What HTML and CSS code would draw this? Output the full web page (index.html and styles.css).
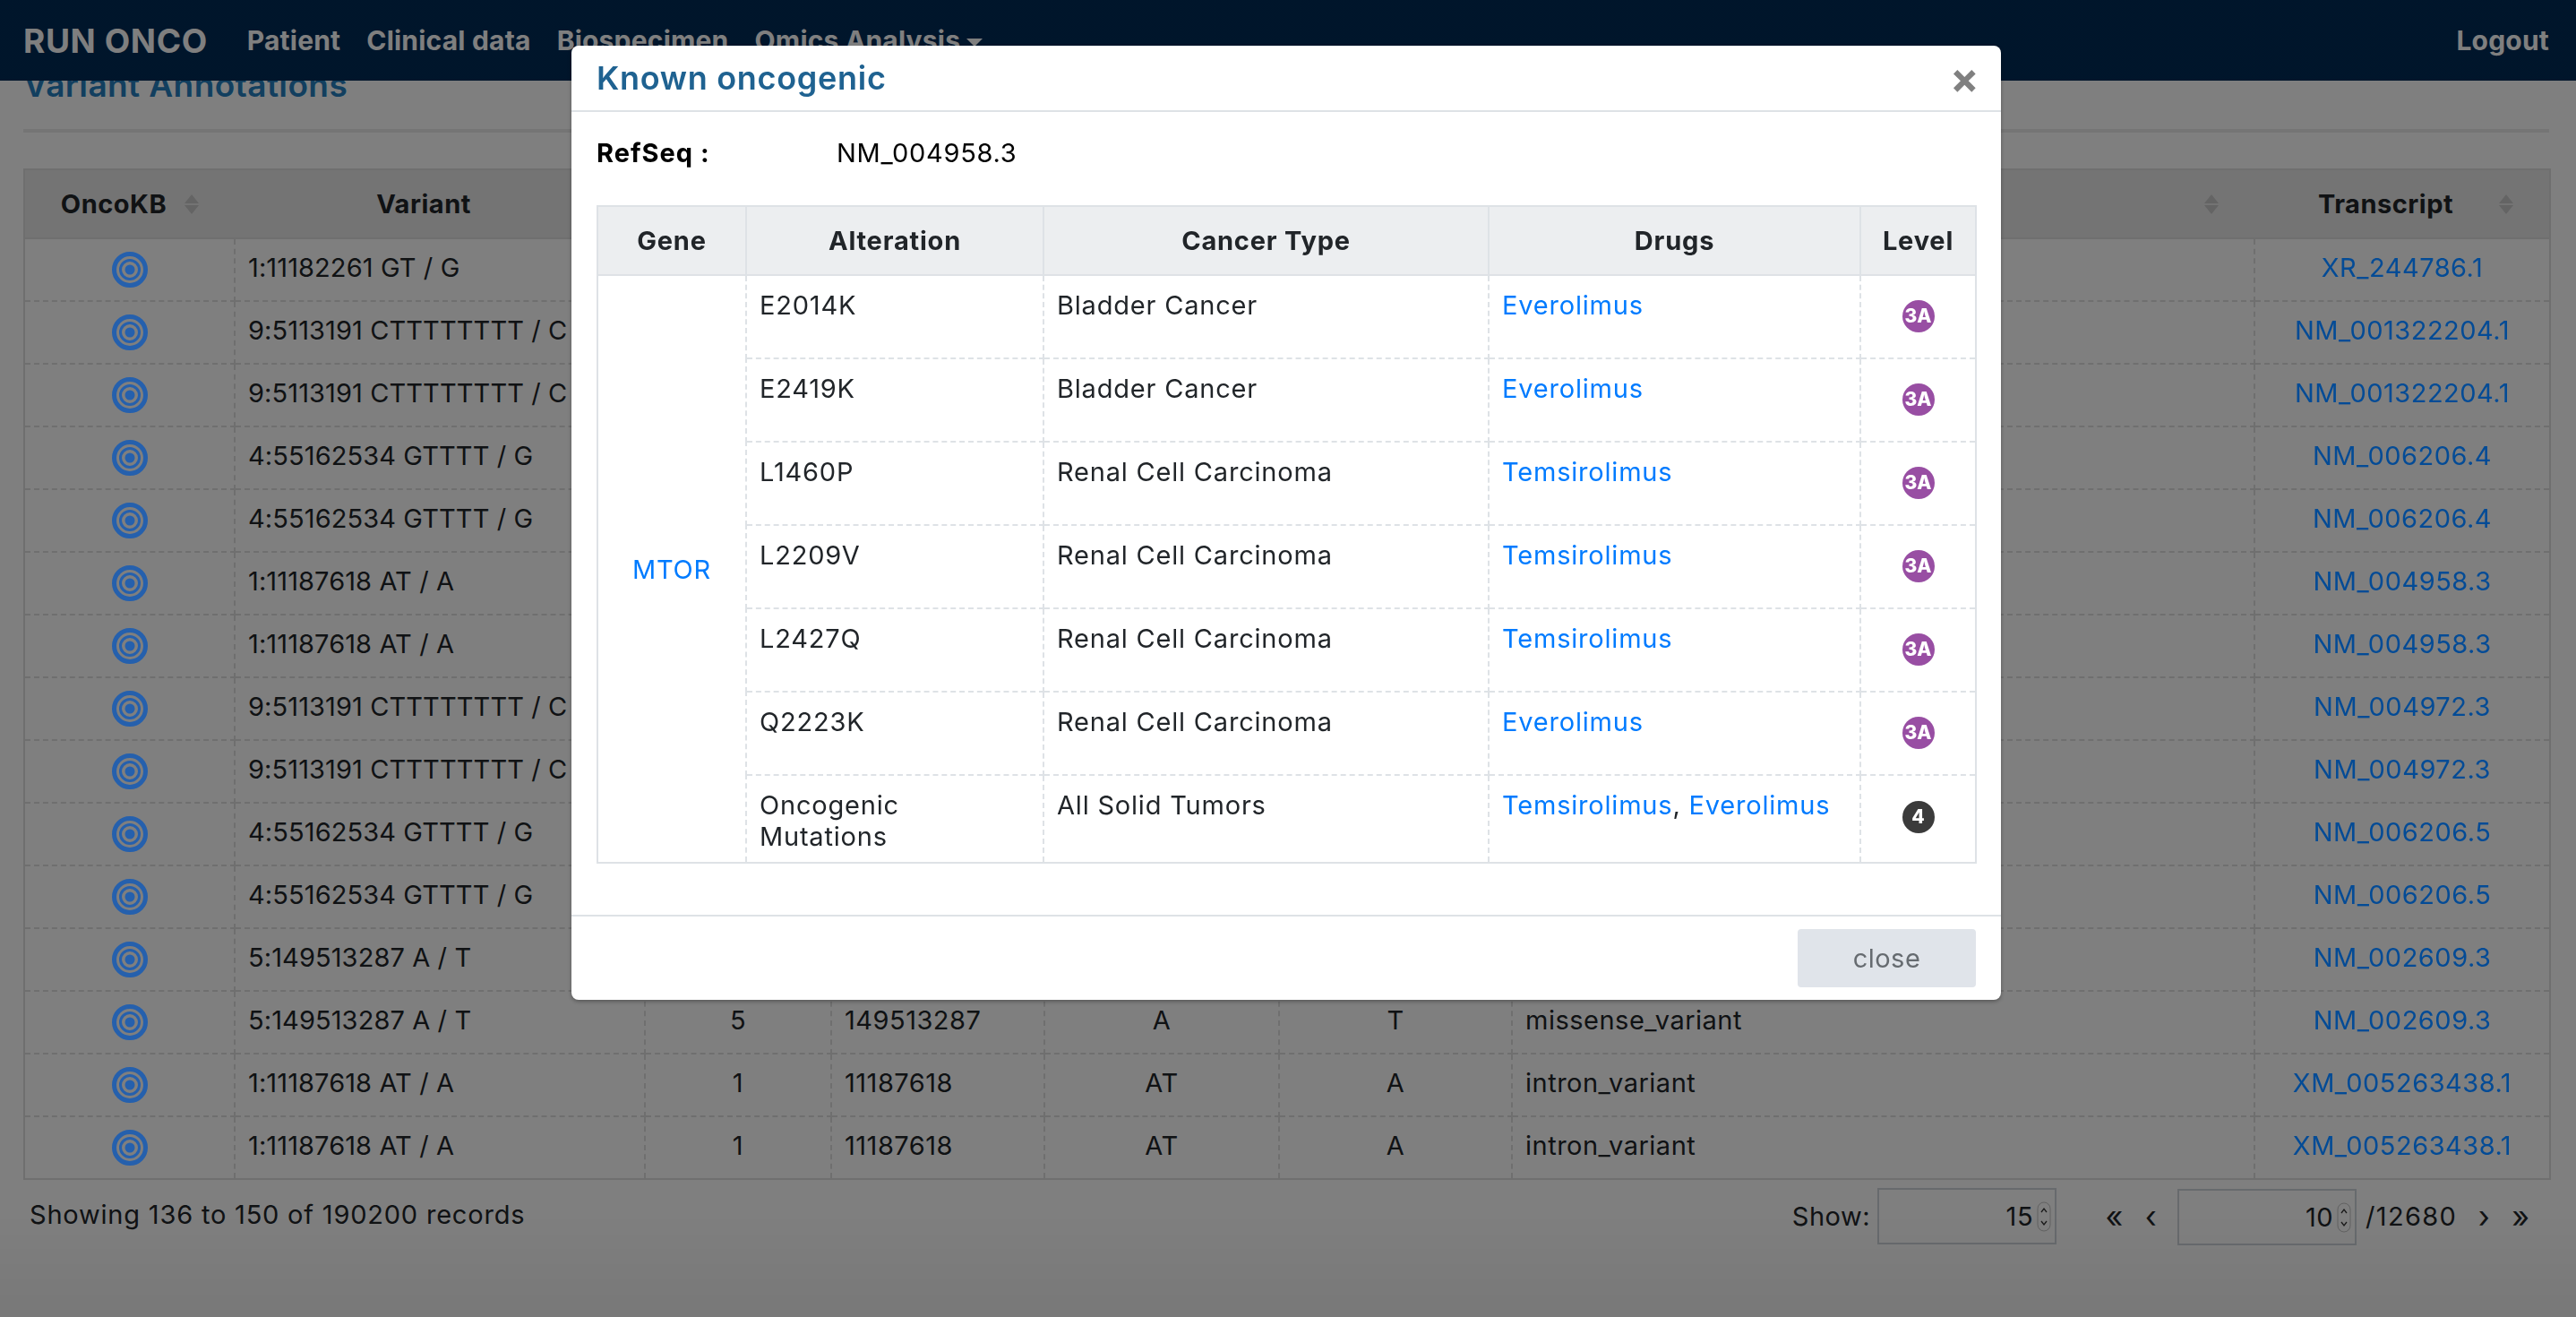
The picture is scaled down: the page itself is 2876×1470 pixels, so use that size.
FILE: index.html
```html
<!DOCTYPE html>
<html lang="en">
<head>
<meta charset="utf-8">
<title>Run Onco</title>
<link rel="stylesheet" href="styles.css">
</head>
<body>
<svg class="defs" width="0" height="0">
  <symbol id="target" viewBox="0 0 40 40"><circle cx="20" cy="20" r="17.5" fill="none" stroke="currentColor" stroke-width="5"/><circle cx="20" cy="20" r="10.5" fill="none" stroke="currentColor" stroke-width="3"/><circle cx="20" cy="20" r="5.5" fill="currentColor"/></symbol>
  <symbol id="sort" viewBox="0 0 16 22"><path d="M8 0L16 10H0Z M0 12H16L8 22Z" fill="currentColor"/></symbol>
  <symbol id="spin" viewBox="0 0 16 34"><rect x="1" y="1" width="14" height="32" rx="7" fill="none" stroke="currentColor" stroke-opacity=".3"/><path d="M5 12L8 8L11 12M5 22L8 26L11 22" fill="none" stroke="currentColor" stroke-width="1.3"/></symbol>
</svg>

<nav class="topbar">
  <a class="brand">RUN ONCO</a>
  <a class="nav-link">Patient</a>
  <a class="nav-link">Clinical data</a>
  <a class="nav-link">Biospecimen</a>
  <a class="nav-link">Omics Analysis<span class="caret"></span></a>
  <a class="nav-link logout">Logout</a>
</nav>

<main class="page">
  <h2 class="page-title">Variant Annotations</h2>
  <table class="grid">
    <colgroup><col class="c1"><col class="c2"><col class="c3"><col class="c4"><col class="c5"><col class="c6"><col class="c7"><col class="c8"></colgroup>
    <thead>
      <tr>
        <th><div class="th"><span>OncoKB</span><svg class="sort"><use href="#sort"/></svg></div></th>
        <th><div class="th"><span>Variant</span><svg class="sort"><use href="#sort"/></svg></div></th>
        <th><div class="th"><span>Chr</span><svg class="sort"><use href="#sort"/></svg></div></th>
        <th><div class="th"><span>Position</span><svg class="sort"><use href="#sort"/></svg></div></th>
        <th><div class="th"><span>Ref</span><svg class="sort"><use href="#sort"/></svg></div></th>
        <th><div class="th"><span>Alt</span><svg class="sort"><use href="#sort"/></svg></div></th>
        <th><div class="th"><span>Consequence</span><svg class="sort"><use href="#sort"/></svg></div></th>
        <th><div class="th"><span>Transcript</span><svg class="sort"><use href="#sort"/></svg></div></th>
      </tr>
    </thead>
    <tbody>
      <tr><td class="ic"><svg class="target"><use href="#target"/></svg></td><td class="var">1:11182261 GT / G</td><td class="ctr">1</td><td>11182261</td><td class="ctr">GT</td><td class="ctr">G</td><td>non_coding_transcript_variant</td><td class="ctr"><a class="link">XR_244786.1</a></td></tr>
      <tr><td class="ic"><svg class="target"><use href="#target"/></svg></td><td class="var">9:5113191 CTTTTTTTT / C</td><td class="ctr">9</td><td>5113191</td><td class="ctr">CT</td><td class="ctr">C</td><td>intron_variant</td><td class="ctr"><a class="link">NM_001322204.1</a></td></tr>
      <tr><td class="ic"><svg class="target"><use href="#target"/></svg></td><td class="var">9:5113191 CTTTTTTTT / C</td><td class="ctr">9</td><td>5113191</td><td class="ctr">CT</td><td class="ctr">C</td><td>intron_variant</td><td class="ctr"><a class="link">NM_001322204.1</a></td></tr>
      <tr><td class="ic"><svg class="target"><use href="#target"/></svg></td><td class="var">4:55162534 GTTTT / G</td><td class="ctr">4</td><td>55162534</td><td class="ctr">GT</td><td class="ctr">G</td><td>intron_variant</td><td class="ctr"><a class="link">NM_006206.4</a></td></tr>
      <tr><td class="ic"><svg class="target"><use href="#target"/></svg></td><td class="var">4:55162534 GTTTT / G</td><td class="ctr">4</td><td>55162534</td><td class="ctr">GT</td><td class="ctr">G</td><td>intron_variant</td><td class="ctr"><a class="link">NM_006206.4</a></td></tr>
      <tr><td class="ic"><svg class="target"><use href="#target"/></svg></td><td class="var">1:11187618 AT / A</td><td class="ctr">1</td><td>11187618</td><td class="ctr">AT</td><td class="ctr">A</td><td>intron_variant</td><td class="ctr"><a class="link">NM_004958.3</a></td></tr>
      <tr><td class="ic"><svg class="target"><use href="#target"/></svg></td><td class="var">1:11187618 AT / A</td><td class="ctr">1</td><td>11187618</td><td class="ctr">AT</td><td class="ctr">A</td><td>intron_variant</td><td class="ctr"><a class="link">NM_004958.3</a></td></tr>
      <tr><td class="ic"><svg class="target"><use href="#target"/></svg></td><td class="var">9:5113191 CTTTTTTTT / C</td><td class="ctr">9</td><td>5113191</td><td class="ctr">CT</td><td class="ctr">C</td><td>intron_variant</td><td class="ctr"><a class="link">NM_004972.3</a></td></tr>
      <tr><td class="ic"><svg class="target"><use href="#target"/></svg></td><td class="var">9:5113191 CTTTTTTTT / C</td><td class="ctr">9</td><td>5113191</td><td class="ctr">CT</td><td class="ctr">C</td><td>intron_variant</td><td class="ctr"><a class="link">NM_004972.3</a></td></tr>
      <tr><td class="ic"><svg class="target"><use href="#target"/></svg></td><td class="var">4:55162534 GTTTT / G</td><td class="ctr">4</td><td>55162534</td><td class="ctr">GT</td><td class="ctr">G</td><td>intron_variant</td><td class="ctr"><a class="link">NM_006206.5</a></td></tr>
      <tr><td class="ic"><svg class="target"><use href="#target"/></svg></td><td class="var">4:55162534 GTTTT / G</td><td class="ctr">4</td><td>55162534</td><td class="ctr">GT</td><td class="ctr">G</td><td>intron_variant</td><td class="ctr"><a class="link">NM_006206.5</a></td></tr>
      <tr><td class="ic"><svg class="target"><use href="#target"/></svg></td><td class="var">5:149513287 A / T</td><td class="ctr">5</td><td>149513287</td><td class="ctr">A</td><td class="ctr">T</td><td>missense_variant</td><td class="ctr"><a class="link">NM_002609.3</a></td></tr>
      <tr><td class="ic"><svg class="target"><use href="#target"/></svg></td><td class="var">5:149513287 A / T</td><td class="ctr">5</td><td>149513287</td><td class="ctr">A</td><td class="ctr">T</td><td>missense_variant</td><td class="ctr"><a class="link">NM_002609.3</a></td></tr>
      <tr><td class="ic"><svg class="target"><use href="#target"/></svg></td><td class="var">1:11187618 AT / A</td><td class="ctr">1</td><td>11187618</td><td class="ctr">AT</td><td class="ctr">A</td><td>intron_variant</td><td class="ctr"><a class="link">XM_005263438.1</a></td></tr>
      <tr><td class="ic"><svg class="target"><use href="#target"/></svg></td><td class="var">1:11187618 AT / A</td><td class="ctr">1</td><td>11187618</td><td class="ctr">AT</td><td class="ctr">A</td><td>intron_variant</td><td class="ctr"><a class="link">XM_005263438.1</a></td></tr>
    </tbody>
  </table>
  <div class="table-foot">
    <div class="records">Showing 136 to 150 of 190200 records</div>
    <div class="pager">
      <span class="show-label">Show:</span>
      <div class="num-box"><span>15</span><svg class="spin"><use href="#spin"/></svg></div>
      <span class="pg-arrow first">«</span>
      <span class="pg-arrow">‹</span>
      <div class="num-box page-box"><span>10</span><svg class="spin"><use href="#spin"/></svg></div>
      <span class="pg-total">/12680</span>
      <span class="pg-arrow">›</span>
      <span class="pg-arrow">»</span>
    </div>
  </div>
</main>

<div class="backdrop"></div>
<div class="modal-layer">
  <section class="modal">
    <header class="modal-head">
      <h3 class="modal-title">Known oncogenic</h3>
      <span class="modal-x">×</span>
    </header>
    <div class="modal-body">
      <div class="refseq"><b class="refseq-key">RefSeq :</b><span>NM_004958.3</span></div>
      <table class="known">
        <colgroup><col class="k1"><col class="k2"><col class="k3"><col class="k4"><col class="k5"></colgroup>
        <thead><tr><th>Gene</th><th>Alteration</th><th>Cancer Type</th><th>Drugs</th><th>Level</th></tr></thead>
        <tbody>
          <tr><td class="gene" rowspan="7"><a class="mlink">MTOR</a></td><td>E2014K</td><td>Bladder Cancer</td><td><a class="mlink">Everolimus</a></td><td class="lvl"><span class="badge b3a">3A</span></td></tr>
          <tr><td>E2419K</td><td>Bladder Cancer</td><td><a class="mlink">Everolimus</a></td><td class="lvl"><span class="badge b3a">3A</span></td></tr>
          <tr><td>L1460P</td><td>Renal Cell Carcinoma</td><td><a class="mlink">Temsirolimus</a></td><td class="lvl"><span class="badge b3a">3A</span></td></tr>
          <tr><td>L2209V</td><td>Renal Cell Carcinoma</td><td><a class="mlink">Temsirolimus</a></td><td class="lvl"><span class="badge b3a">3A</span></td></tr>
          <tr><td>L2427Q</td><td>Renal Cell Carcinoma</td><td><a class="mlink">Temsirolimus</a></td><td class="lvl"><span class="badge b3a">3A</span></td></tr>
          <tr><td>Q2223K</td><td>Renal Cell Carcinoma</td><td><a class="mlink">Everolimus</a></td><td class="lvl"><span class="badge b3a">3A</span></td></tr>
          <tr class="last"><td>Oncogenic Mutations</td><td>All Solid Tumors</td><td><a class="mlink">Temsirolimus</a>, <a class="mlink">Everolimus</a></td><td class="lvl"><span class="badge b4">4</span></td></tr>
        </tbody>
      </table>
    </div>
    <footer class="modal-foot"><button class="close-btn">close</button></footer>
  </section>
</div>
</body>
</html>
```

FILE: styles.css
```css
* { box-sizing: border-box; }
html, body { margin: 0; height: 1470px; overflow: hidden; }
body { background: #fff; color: #212529; font-family: Inter, "Liberation Sans", sans-serif; font-size: 29px; line-height: 35px; letter-spacing: 0.5px; }
.defs { position: absolute; }

.topbar { position: fixed; top: 0; left: 0; right: 0; height: 90px; z-index: 2; display: flex; align-items: center; padding: 0 30px 0 26px; background: #002b56; color: #fff; }
.brand { font-size: 37px; font-weight: 700; margin-right: 44px; letter-spacing: 0.6px; }
.nav-link { font-size: 30px; font-weight: 700; margin-right: 29px; letter-spacing: 0.2px; }
.caret { display: inline-block; margin-left: 7px; vertical-align: 4px; border: 9px solid transparent; border-top-color: #fff; border-bottom: 0; }
.logout { margin: 0 0 0 auto; }

.page { padding: 70px 30px 0 26px; }
.page-title { margin: 0 0 40px; height: 78px; padding-bottom: 24px; border-bottom: 4px solid #eaeaea; font-size: 37px; line-height: 50px; font-weight: 600; letter-spacing: 0.4px; color: #247ebe; }

.grid { width: 2820px; table-layout: fixed; border-collapse: collapse; border: 2px solid #dedede; }
.c1 { width: 235px; } .c2 { width: 458px; } .c3 { width: 208px; } .c4 { width: 238px; }
.c5 { width: 262px; } .c6 { width: 260px; } .c7 { width: 829px; } .c8 { width: 330px; }
.grid th { height: 77px; padding: 0; background: #e9e9e9; border-bottom: 2px solid #dedede; font-weight: 700; }
.th { display: flex; align-items: center; padding: 0 40px 0 20px; }
.th span { flex: 1; text-align: center; }
.sort { width: 16px; height: 22px; color: #c8c8c8; }
.grid td { height: 70px; padding: 0 14px 6px; border: 2px dashed #dedede; }
.grid td.ic { text-align: center; padding: 0; }
.grid td.var { letter-spacing: 0.1px; }
.ctr { text-align: center; }
.target { position: relative; z-index: 3; display: block; width: 40px; height: 40px; margin: 0 auto; color: #2560ad; }
.link { position: relative; z-index: 3; color: #034b96; }

.table-foot { display: flex; justify-content: space-between; align-items: center; padding: 10px 11px 0 7px; }
.records { align-self: flex-start; margin-top: 11px; letter-spacing: 0.8px; }
.pager { display: flex; align-items: center; margin-top: -2px; }
.show-label { margin-right: 8px; }
.num-box { width: 200px; height: 63px; display: flex; justify-content: flex-end; align-items: center; gap: 4px; padding-right: 4px; border: 2px solid #ced4da; }
.spin { width: 16px; height: 34px; color: #333; }
.pg-arrow { width: 41px; text-align: center; font-size: 34px; }
.first { margin-left: 44px; }
.page-box { margin: 2px 10px 0 9px; }
.pg-total { margin-right: 10px; letter-spacing: 1.3px; }

.backdrop { position: fixed; inset: 0; z-index: 2; background: linear-gradient(180deg, rgba(0, 0, 0, 0.5) 92%, rgba(0, 0, 0, 0.53) 100%); }
.modal-layer { position: fixed; inset: 0; z-index: 5; padding: 51px 0 0 638px; }
.modal { width: 1596px; height: 1065px; display: flex; flex-direction: column; background: #fff; border-radius: 8px; box-shadow: 0 2px 4px rgba(0,0,0,.3); }
.modal-head { height: 74px; flex: none; display: flex; align-items: center; justify-content: space-between; padding: 0 24px 0 28px; border-bottom: 2px solid #dee2e6; }
.modal-title { margin: 0; font-size: 36px; font-weight: 600; color: #1f6291; letter-spacing: 0.7px; }
.modal-x { font-size: 48px; line-height: 48px; font-weight: 700; color: #808080; }
.modal-body { flex: 1; padding: 28px 28px 0 28px; }
.refseq { display: flex; height: 36px; margin-bottom: 40px; color: #000; letter-spacing: 0.7px; }
.refseq-key { width: 268px; font-weight: 700; letter-spacing: 1px; }
.known { width: 1539px; table-layout: fixed; border-collapse: collapse; border: 2px solid #dee2e6; color: #212529; letter-spacing: 0.8px; }
.k1 { width: 166px; } .k2 { width: 332px; } .k3 { width: 497px; } .k4 { width: 415px; } .k5 { width: 129px; }
.known th { height: 77px; padding: 0; background: #eceef0; border: 2px solid #dee2e6; font-weight: 700; }
.known td { height: 93px; padding: 15px 14px 0; vertical-align: top; border: 2px dashed #dee2e6; }
.known .last td { height: 98px; }
.known td.gene { text-align: center; vertical-align: middle; padding: 0; border-bottom: 0; }
.known td.lvl { text-align: center; vertical-align: middle; padding: 0 0 4px; }
.known .last td.lvl { padding-bottom: 6px; }
.mlink { color: #007bff; }
.badge { display: inline-flex; justify-content: center; align-items: center; width: 36px; height: 36px; border-radius: 50%; color: #fff; font-size: 21px; font-weight: 800; line-height: 36px; letter-spacing: 0; vertical-align: middle; }
.b3a { background: #984ea3; }
.b4 { background: #3b3b3b; }
.modal-foot { height: 95px; flex: none; display: flex; justify-content: flex-end; align-items: center; padding: 0 28px 0 0; border-top: 2px solid #dee2e6; }
.close-btn { width: 199px; height: 65px; border: 0; border-radius: 4px; background: #e0e4ea; color: #666b70; font: inherit; letter-spacing: 0.5px; }
```
